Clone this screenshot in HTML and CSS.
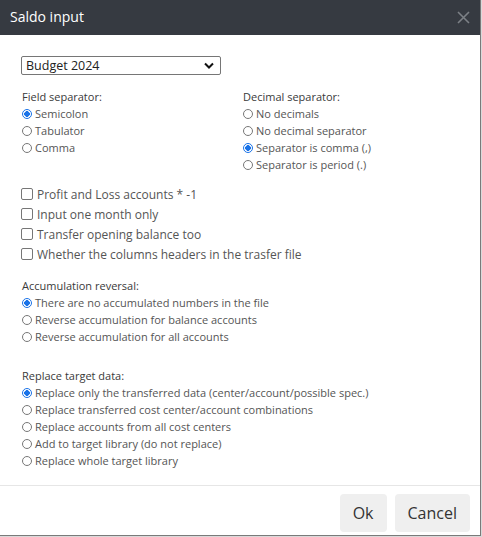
FILE: index.html
```html
<!DOCTYPE html>
<html>
<head>
<meta charset="utf-8">
<link rel="stylesheet" href="styles.css">
</head>
<body>
<div class="dialog">
  <div class="header">
    <span class="title">Saldo input</span>
    <svg class="close" width="13" height="13" viewBox="0 0 13 13"><path d="M1 1L12 12M12 1L1 12" stroke="#7c8086" stroke-width="1.6" fill="none"/></svg>
  </div>
  <div class="content">
    <div class="select">
      <span>Budget 2024</span>
      <svg width="10" height="7" viewBox="0 0 10 7"><path d="M1 1.5L5 5.5L9 1.5" stroke="#111" stroke-width="2" fill="none"/></svg>
    </div>
    <div class="cols">
      <div class="group">
        <div class="heading">Field separator:</div>
        <label class="opt"><span class="radio on"></span>Semicolon</label>
        <label class="opt"><span class="radio"></span>Tabulator</label>
        <label class="opt"><span class="radio"></span>Comma</label>
      </div>
      <div class="group">
        <div class="heading">Decimal separator:</div>
        <label class="opt"><span class="radio"></span>No decimals</label>
        <label class="opt"><span class="radio"></span>No decimal separator</label>
        <label class="opt"><span class="radio on"></span>Separator is comma (,)</label>
        <label class="opt"><span class="radio"></span>Separator is period (.)</label>
      </div>
    </div>
    <div class="checks">
      <label class="chk"><span class="box"></span>Profit and Loss accounts * -1</label>
      <label class="chk"><span class="box"></span>Input one month only</label>
      <label class="chk"><span class="box"></span>Transfer opening balance too</label>
      <label class="chk"><span class="box"></span>Whether the columns headers in the trasfer file</label>
    </div>
    <div class="group acc">
      <div class="heading">Accumulation reversal:</div>
      <label class="opt"><span class="radio on"></span>There are no accumulated numbers in the file</label>
      <label class="opt"><span class="radio"></span>Reverse accumulation for balance accounts</label>
      <label class="opt"><span class="radio"></span>Reverse accumulation for all accounts</label>
    </div>
    <div class="group rep">
      <div class="heading">Replace target data:</div>
      <label class="opt"><span class="radio on"></span>Replace only the transferred data (center/account/possible spec.)</label>
      <label class="opt"><span class="radio"></span>Replace transferred cost center/account combinations</label>
      <label class="opt"><span class="radio"></span>Replace accounts from all cost centers</label>
      <label class="opt"><span class="radio"></span>Add to target library (do not replace)</label>
      <label class="opt"><span class="radio"></span>Replace whole target library</label>
    </div>
  </div>
  <div class="footer">
    <button class="btn">Ok</button>
    <button class="btn">Cancel</button>
  </div>
</div>
</body>
</html>
```
FILE: styles.css
```css
html, body {
  margin: 0;
  padding: 0;
  background: #d9d9d9;
}
body {
  font-family: "Open Sans", "Noto Sans", sans-serif;
  color: #333;
}
.dialog {
  width: 480px;
  height: 535px;
  background: #fff;
  border-right: 1px solid #7a7a7a;
  border-bottom: 1px solid #7a7a7a;
  display: flex;
  flex-direction: column;
}
.header {
  height: 35px;
  background: #363a41;
  display: flex;
  align-items: center;
  justify-content: space-between;
  padding: 0 10px 0 10px;
  flex-shrink: 0;
}
.title {
  color: #fff;
  font-size: 14px;
  position: relative;
  top: -1px;
}
.content {
  flex: 1;
  padding: 21px 0 0 21px;
}
.select {
  width: 188px;
  height: 17px;
  border: 1px solid #767676;
  border-radius: 2px;
  display: flex;
  align-items: center;
  justify-content: space-between;
  padding: 0 6px 0 4px;
  box-sizing: content-box;
  font-size: 12.5px;
  color: #222;
}
.cols {
  display: grid;
  grid-template-columns: 221px 1fr;
  margin-top: 13px;
}
.group {
  display: flex;
  flex-direction: column;
}
.heading {
  font-size: 11px;
  line-height: 17px;
  color: #3a3a3a;
  padding-left: 1px;
}
.opt {
  display: flex;
  align-items: center;
  font-size: 11px;
  line-height: 17px;
  height: 17px;
  color: #555;
}
.radio {
  width: 10px;
  height: 10px;
  border: 1px solid #777;
  border-radius: 50%;
  box-sizing: border-box;
  margin: 1px 3px 0 1px;
  flex-shrink: 0;
}
.radio.on {
  border: 1px solid #1a73e8;
  background: radial-gradient(circle, #1a73e8 0 2.6px, #fff 3px 100%);
}
.checks {
  margin-top: 11px;
  display: flex;
  flex-direction: column;
}
.chk {
  display: flex;
  align-items: center;
  height: 20px;
  font-size: 12px;
  color: #555;
}
.box {
  width: 12px;
  height: 12px;
  border: 1px solid #767676;
  border-radius: 2px;
  box-sizing: border-box;
  margin: 0 4px 0 0;
  flex-shrink: 0;
}
.acc {
  margin-top: 13px;
}
.rep {
  margin-top: 22px;
}
.footer {
  border-top: 1px solid #e6e6e6;
  height: 50px;
  display: flex;
  justify-content: flex-end;
  align-items: flex-start;
  gap: 8px;
  padding: 8px 10px 0 0;
  box-sizing: border-box;
}
.btn {
  font-family: "Open Sans", "Noto Sans", sans-serif;
  font-size: 16px;
  color: #333;
  background: #efefef;
  border: none;
  border-radius: 4px;
  height: 38px;
  padding: 0 13px;
}
```
